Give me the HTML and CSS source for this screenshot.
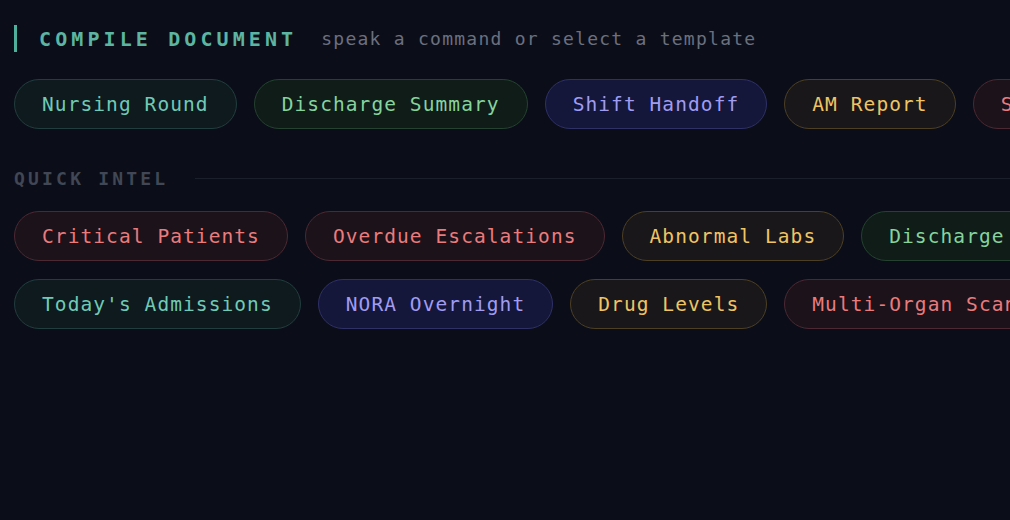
FILE: index.html
```html
<!DOCTYPE html>
<html>
<head>
<meta charset="utf-8">
<link rel="stylesheet" href="styles.css">
</head>
<body>
<div class="page">
  <div class="header">
    <div class="title">COMPILE DOCUMENT</div>
    <div class="hint">speak a command or select a template</div>
  </div>
  <div class="row">
    <button class="pill teal">Nursing Round</button>
    <button class="pill green">Discharge Summary</button>
    <button class="pill indigo">Shift Handoff</button>
    <button class="pill amber">AM Report</button>
    <button class="pill red">SBAR Note</button>
  </div>
  <div class="section">
    <div class="section-label">QUICK INTEL</div>
    <div class="section-line"></div>
  </div>
  <div class="row">
    <button class="pill red">Critical Patients</button>
    <button class="pill red">Overdue Escalations</button>
    <button class="pill amber">Abnormal Labs</button>
    <button class="pill green">Discharge Ready</button>
  </div>
  <div class="row">
    <button class="pill teal">Today's Admissions</button>
    <button class="pill indigo">NORA Overnight</button>
    <button class="pill amber">Drug Levels</button>
    <button class="pill red">Multi-Organ Scan</button>
  </div>
</div>
</body>
</html>
```
FILE: styles.css
```css
html, body {
  margin: 0;
  padding: 0;
  background: #0b0e18;
  height: 100%;
  overflow: hidden;
}
.page {
  padding: 25px 0 0 14px;
  font-family: "DejaVu Sans Mono", "Liberation Mono", monospace;
  overflow: hidden;
}
.header {
  display: flex;
  align-items: center;
  border-left: 3px solid #4fae9c;
  height: 27px;
  padding-left: 22px;
  margin-bottom: 27px;
}
.title {
  color: #5cb5a2;
  font-weight: bold;
  font-size: 20px;
  letter-spacing: 4.1px;
  margin-right: 24px;
  white-space: nowrap;
}
.hint {
  color: #6b7080;
  font-size: 18px;
  letter-spacing: 1.25px;
  white-space: nowrap;
}
.row {
  display: flex;
  gap: 17px;
  flex-wrap: nowrap;
  white-space: nowrap;
  margin-bottom: 18px;
}
.pill {
  flex: none;
  height: 50px;
  padding: 0 27px;
  border-radius: 25px;
  border: 1px solid;
  font-family: inherit;
  font-size: 19.5px;
  letter-spacing: 1.08px;
  background: transparent;
}
.teal { color: #6fcab6; border-color: #213d3e; background: #0f1a1f; }
.green { color: #86d39e; border-color: #24422f; background: #0f1c18; }
.indigo { color: #a09cf2; border-color: #2e3066; background: #141739; }
.amber { color: #f0c463; border-color: #4c3f23; background: #19171a; }
.red { color: #ea7b7d; border-color: #4c2833; background: #1b121a; }
.section {
  display: flex;
  align-items: center;
  margin: 39px 0 22px;
}
.section-label {
  color: #414755;
  font-weight: bold;
  font-size: 18px;
  letter-spacing: 3.2px;
  margin-right: 27px;
  white-space: nowrap;
}
.section-line {
  flex: 1;
  height: 1px;
  background: #1a1f2b;
}
```
